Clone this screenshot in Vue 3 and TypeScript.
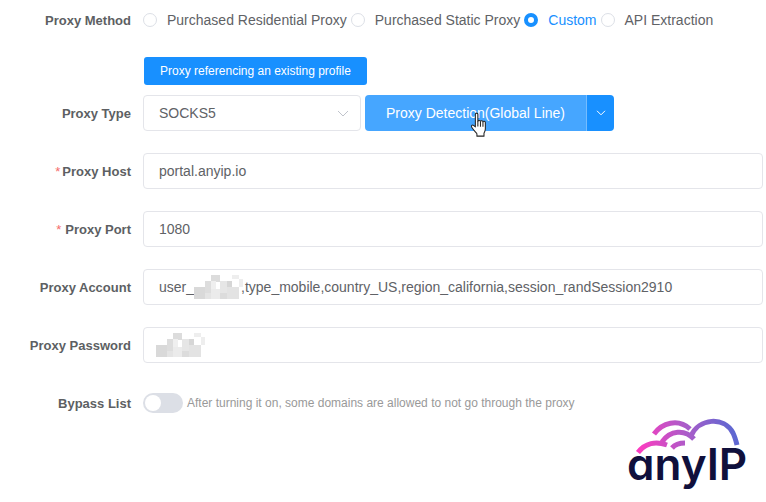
<script setup lang="ts">
const methods = [
  { label: 'Purchased Residential Proxy', checked: false },
  { label: 'Purchased Static Proxy', checked: false },
  { label: 'Custom', checked: true },
  { label: 'API Extraction', checked: false },
]

// blurred bits of the account name, coordinates local to a 50x25 box
const mosaic = [
  { x: 17, y: 0, w: 9, h: 7, c: '#dcdcdc' },
  { x: 38, y: 0, w: 7, h: 4, c: '#eeeeee' },
  { x: 11, y: 6, w: 6, h: 12, c: '#dddddd' },
  { x: 17, y: 6, w: 5, h: 12, c: '#efefef' },
  { x: 26, y: 6, w: 7, h: 12, c: '#e6e6e6' },
  { x: 33, y: 6, w: 5, h: 7, c: '#d6d6d6' },
  { x: 45, y: 4, w: 4, h: 8, c: '#eeeeee' },
  { x: 0, y: 12, w: 11, h: 12, c: '#d9d9d9' },
  { x: 11, y: 18, w: 6, h: 6, c: '#e4e4e4' },
  { x: 17, y: 14, w: 9, h: 10, c: '#ebebeb' },
  { x: 26, y: 18, w: 7, h: 6, c: '#dcdcdc' },
  { x: 33, y: 12, w: 12, h: 12, c: '#e3e3e3' },
]
</script>

<template>
  <div class="page">
    <div class="method-row">
      <span class="label">Proxy Method</span>
      <div class="radios">
        <label v-for="m in methods" :key="m.label" class="radio" :class="{ on: m.checked }">
          <i class="dot"></i>
          <span>{{ m.label }}</span>
        </label>
      </div>
    </div>

    <div class="ref-row">
      <button class="ref-btn">Proxy referencing an existing profile</button>
    </div>

    <div class="row">
      <span class="label">Proxy Type</span>
      <div class="field select">
        <span>SOCKS5</span>
        <svg class="chev" width="12" height="7" viewBox="0 0 12 7">
          <path d="M1 1l5 5 5-5" fill="none" stroke="#c0c4cc" stroke-width="1" />
        </svg>
      </div>
      <div class="split">
        <button class="split-main">Proxy Detection(Global Line)</button>
        <button class="split-arrow">
          <svg width="10" height="6" viewBox="0 0 10 6">
            <path d="M1 .8l4 4 4-4" fill="none" stroke="#fff" stroke-width="1" />
          </svg>
        </button>
      </div>
    </div>

    <div class="row">
      <span class="label"><em>*</em>Proxy Host</span>
      <div class="field">portal.anyip.io</div>
    </div>

    <div class="row">
      <span class="label"><em class="wide">*</em>Proxy Port</span>
      <div class="field">1080</div>
    </div>

    <div class="row">
      <span class="label">Proxy Account</span>
      <div class="field">
        user_<svg class="blur tight" width="50" height="25" viewBox="0 0 50 25">
          <rect v-for="(r, i) in mosaic" :key="i" :x="r.x" :y="r.y" :width="r.w" :height="r.h" :fill="r.c" />
        </svg>,type_mobile,country_US,region_california,session_randSession2910
      </div>
    </div>

    <div class="row">
      <span class="label">Proxy Password</span>
      <div class="field pass">
        <svg class="blur" width="50" height="25" viewBox="0 0 50 25">
          <rect v-for="(r, i) in mosaic" :key="i" :x="r.x" :y="r.y" :width="r.w" :height="r.h" :fill="r.c" />
        </svg>
      </div>
    </div>

    <div class="row bypass">
      <span class="label">Bypass List</span>
      <span class="switch"><i></i></span>
      <span class="hint">After turning it on, some domains are allowed to not go through the proxy</span>
    </div>

    <!-- mouse pointer caught in the capture -->
    <svg class="cursor" width="18" height="26" viewBox="1 0 15 25">
      <path
        d="M5 2.2c0-1.5 2.4-1.5 2.4 0V9c.3-1.2 2.3-1.2 2.5.1.3-1 2.2-1 2.4.3.4-.8 2.2-.6 2.3.7v6.2c0 1.500-.6 2.800-1.300 4.200v2.700H6.500v-2.300C5 19 3.300 17.400 1.500 14.600.700 13.300 2 12 3.200 12.800L5 14.300z"
        fill="#fff" stroke="#222" stroke-width="1" stroke-linejoin="round" />
      <path d="M7.400 9v5M9.900 9.300v5M12.300 9.600v4.700" stroke="#222" stroke-width="1" fill="none" />
    </svg>

    <div class="logo">
      <svg width="130" height="50" viewBox="620 415 130 50">
        <defs>
          <linearGradient id="arc" gradientUnits="userSpaceOnUse" x1="640" y1="450" x2="738" y2="430">
            <stop offset="0" stop-color="#fb3cc0" />
            <stop offset=".5" stop-color="#a95dc9" />
            <stop offset="1" stop-color="#5868d2" />
          </linearGradient>
        </defs>
        <g fill="none" stroke="url(#arc)" stroke-width="5">
          <path d="M654 434C662 423 678 418 690 429" />
          <path d="M638 452.500C645 443 656 441 667 445" />
          <path d="M662 442C670 430 685 429 694 439" />
          <path d="M691 436C699 418 724 416 733 433C735 437 736 441 737 445" />
          <path d="M672 448C675 444.500 679 443 685 443" />
        </g>
      </svg>
      <span class="logo-text">anyIP</span>
    </div>
  </div>
</template>

<style>
html,
body {
  margin: 0;
  background: #fff;
  overflow: hidden;
}
</style>

<style scoped>
.page {
  position: relative;
  width: 766px;
  height: 502px;
  box-sizing: border-box;
  padding: 0 3px 0 0;
  font-family: 'Liberation Sans', Arial, sans-serif;
  font-size: 14px;
  color: #606266;
  overflow: hidden;
}
.label {
  flex: none;
  width: 131px;
  margin-right: 12px;
  text-align: right;
  font-size: 13px;
  font-weight: 700;
  color: #5d5f63;
}
.label em {
  font-style: normal;
  font-weight: 400;
  color: #f56c6c;
  margin-right: 2px;
}
.label em.wide {
  margin-right: 4px;
}
.method-row {
  display: flex;
  align-items: center;
  height: 40px;
}
.radios {
  display: flex;
  align-items: center;
}
.radio {
  display: flex;
  align-items: center;
  margin-right: 4px;
  white-space: nowrap;
}
.dot {
  box-sizing: border-box;
  width: 14px;
  height: 14px;
  margin-right: 10px;
  border: 1px solid #dcdfe6;
  border-radius: 50%;
  background: #fff;
}
.radio.on {
  color: #1890ff;
}
.radio.on .dot {
  border: 4px solid #1890ff;
}
.ref-row {
  padding: 17px 0 10px 144px;
}
.ref-btn {
  display: block;
  width: 223px;
  height: 28px;
  padding: 0;
  border: 0;
  border-radius: 3px;
  background: #1890ff;
  color: #fff;
  font: 12px 'Liberation Sans', Arial, sans-serif;
}
.row {
  display: flex;
  align-items: center;
  height: 36px;
  margin-bottom: 22px;
}
.field {
  flex: 1;
  box-sizing: border-box;
  height: 36px;
  padding: 0 15px;
  border: 1px solid #e4e5ea;
  border-radius: 4px;
  line-height: 34px;
  white-space: nowrap;
  overflow: hidden;
}
.select {
  flex: none;
  display: flex;
  align-items: center;
  justify-content: space-between;
  width: 218px;
  padding-right: 11px;
}
.blur {
  vertical-align: middle;
  margin-top: -2px;
}
.blur.tight {
  margin-right: -3px;
}
.pass {
  padding-left: 12px;
}
.split {
  display: flex;
  margin-left: 4px;
  height: 36px;
}
.split button {
  border: 0;
  padding: 0;
  color: #fff;
  font: 14px 'Liberation Sans', Arial, sans-serif;
}
.split-main {
  width: 221px;
  border-radius: 4px 0 0 4px;
  background: #46a6ff;
}
.split-arrow {
  display: flex;
  align-items: center;
  justify-content: center;
  width: 28px;
  border-left: 1px solid #74bcff !important;
  border-radius: 0 4px 4px 0;
  background: #1890ff;
}
.switch {
  position: relative;
  flex: none;
  width: 40px;
  height: 20px;
  border-radius: 10px;
  background: #dcdfe6;
}
.switch i {
  position: absolute;
  top: 2px;
  left: 2px;
  width: 16px;
  height: 16px;
  border-radius: 50%;
  background: #fff;
}
.hint {
  margin-left: 4px;
  font-size: 12px;
  color: #999;
}
.cursor {
  position: absolute;
  left: 470px;
  top: 112px;
}
.logo {
  position: absolute;
  left: 620px;
  top: 415px;
  width: 130px;
  height: 80px;
}
.logo svg {
  display: block;
}
.logo-text {
  position: absolute;
  left: 7px;
  top: 23px;
  font-family: Inter, 'Liberation Sans', sans-serif;
  font-size: 44px;
  font-weight: 600;
  font-feature-settings: 'cv11';
  line-height: 52px;
  color: #10103c;
}
</style>
